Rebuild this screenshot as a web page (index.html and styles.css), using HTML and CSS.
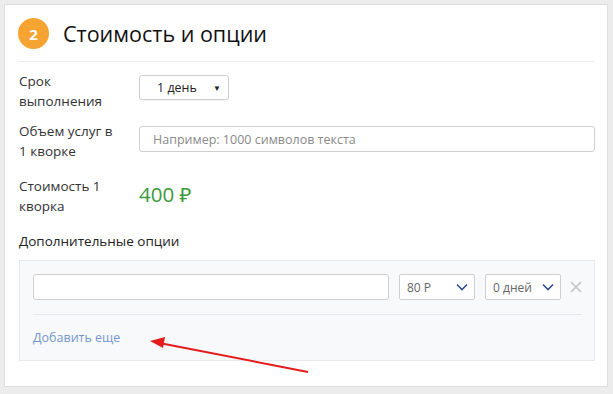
FILE: index.html
```html
<!DOCTYPE html>
<html lang="ru">
<head>
<meta charset="utf-8">
<link rel="stylesheet" href="styles.css">
</head>
<body>
<div class="card">
  <div class="header">
    <span class="badge">2</span>
    <h2 class="title">Стоимость и опции</h2>
  </div>
  <div class="form">
    <div class="label">Срок<br>выполнения</div>
    <div class="ctrl ctrl-sel">
      <div class="select-days"><span>1 день</span><span class="tri">▼</span></div>
    </div>
    <div class="label">Объем услуг в<br>1 кворке</div>
    <div class="ctrl ctrl-inp">
      <div class="input">Например: 1000 символов текста</div>
    </div>
    <div class="label label-cost">Стоимость 1<br>кворка</div>
    <div class="ctrl ctrl-price"><span class="price">400 ₽</span></div>
  </div>
  <div class="opt-title">Дополнительные опции</div>
  <div class="options">
    <div class="opt-row">
      <div class="opt-input"></div>
      <div class="opt-select"><span>80 Р</span>
        <svg class="chev" width="12" height="8" viewBox="0 0 12 8"><path d="M1 1.5 L6 6.5 L11 1.5" fill="none" stroke="#2f4f8f" stroke-width="1.6"/></svg>
      </div>
      <div class="opt-select"><span>0 дней</span>
        <svg class="chev" width="12" height="8" viewBox="0 0 12 8"><path d="M1 1.5 L6 6.5 L11 1.5" fill="none" stroke="#2f4f8f" stroke-width="1.6"/></svg>
      </div>
      <svg class="close" width="12" height="12" viewBox="0 0 12 12"><path d="M1 1 L11 11 M11 1 L1 11" stroke="#c4c4c4" stroke-width="1.6"/></svg>
    </div>
    <div class="opt-sep"></div>
    <a class="add-link">Добавить еще</a>
  </div>
  <svg class="arrow" width="613" height="394" viewBox="0 0 613 394">
    <path d="M308 372 L162 343.5" stroke="#e31c1c" stroke-width="2" fill="none"/>
    <path d="M150 341 L165 337 L163 348 Z" fill="#e31c1c"/>
  </svg>
</div>
</body>
</html>
```
FILE: styles.css
```css
html, body {
  margin: 0;
  padding: 0;
}
body {
  background: #ececec;
  font-family: "Open Sans", "Noto Sans", sans-serif;
  color: #333;
  width: 613px;
  height: 394px;
  overflow: hidden;
}
.card {
  margin: 4px 5px 0 4px;
  height: 381px;
  background: #fff;
  border: 1px solid #dedede;
  padding: 0 12px 0 14px;
  box-sizing: content-box;
  width: 576px;
}
.header {
  display: flex;
  align-items: center;
  height: 57px;
  box-sizing: border-box;
  padding-top: 1px;
  border-bottom: 1px solid #ececec;
}
.badge {
  width: 31px;
  height: 31px;
  border-radius: 50%;
  background: #f5a431;
  color: #fff;
  font-weight: 700;
  font-size: 15px;
  display: flex;
  align-items: center;
  justify-content: center;
  margin-left: -1px;
}
.title {
  margin: 0 0 0 14px;
  font-weight: 400;
  font-size: 21.5px;
  color: #111;
}
.form {
  display: grid;
  grid-template-columns: 120px 1fr;
  row-gap: 10px;
  margin-top: 9px;
}
.label {
  font-size: 13.5px;
  line-height: 20px;
  color: #333;
}
.ctrl-sel { padding-top: 4px; }
.ctrl-inp { padding-top: 5px; }
.ctrl-price { padding-top: 6px; }
.label-cost { margin-top: 5px; }
.form .ctrl-price { margin-top: 5px; }
.select-days {
  width: 90px;
  height: 25px;
  box-sizing: border-box;
  border: 1px solid #cfcfcf;
  border-radius: 3px;
  display: flex;
  align-items: center;
  justify-content: space-between;
  padding: 0 7px 0 17px;
  font-size: 12.5px;
  color: #222;
  box-shadow: 0 1px 1px rgba(0,0,0,0.05);
}
.tri { font-size: 8px; color: #222; }
.input {
  height: 26px;
  box-sizing: border-box;
  border: 1px solid #cfcfcf;
  border-radius: 3px;
  padding: 0 13px;
  display: flex;
  align-items: center;
  font-size: 12.5px;
  color: #8a8a8a;
}
.price {
  font-size: 20.5px;
  line-height: 24px;
  color: #3b9a3b;
}
.opt-title {
  margin-top: 15px;
  font-size: 13.5px;
  line-height: 20px;
  color: #222;
}
.options {
  margin-top: 9px;
  height: 101px;
  box-sizing: border-box;
  border: 1px solid #e7e9ec;
  background: #f8f9fb;
  padding: 13px 12px 0 13px;
}
.opt-row {
  display: flex;
  align-items: center;
  gap: 10px;
}
.opt-input {
  width: 356px;
  height: 26px;
  box-sizing: border-box;
  background: #fff;
  border: 1px solid #cfcfcf;
  border-radius: 3px;
}
.opt-select {
  width: 76px;
  height: 26px;
  box-sizing: border-box;
  background: #fff;
  border: 1px solid #cfcfcf;
  border-radius: 2px;
  display: flex;
  align-items: center;
  justify-content: space-between;
  padding: 0 6px 0 7px;
  font-size: 12px;
  color: #666;
}
.close { margin-left: -1px; }
.opt-sep {
  margin-top: 14px;
  height: 1px;
  background: #e6e8eb;
  width: 549px;
}
.add-link {
  display: block;
  margin-top: 14px;
  font-size: 12.5px;
  line-height: 18px;
  color: #7397cc;
}
.arrow {
  position: absolute;
  left: 0;
  top: 0;
  pointer-events: none;
}
```
